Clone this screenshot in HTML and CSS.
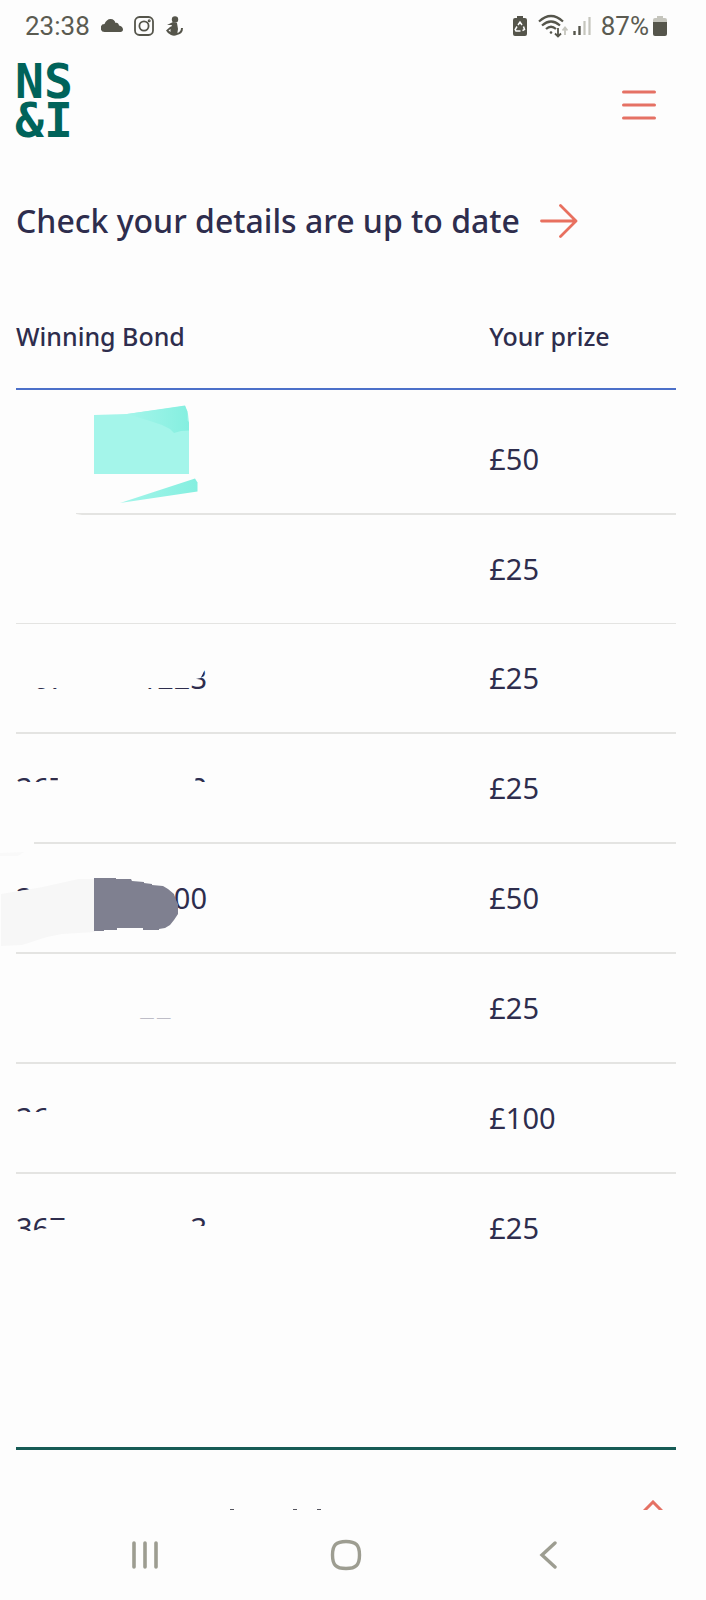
FILE: index.html
```
<!DOCTYPE html>
<html lang="en">
<head>
    <meta charset="UTF-8">
    <meta name="viewport" content="width=device-width, initial-scale=1">
    <title>NS&amp;I</title>
    <link rel="stylesheet" href="styles.css">
</head>
<body>

    <div class="status">
        <span class="status-time">23:38</span>
        <div class="status-left">
            <svg width="22" height="22" viewBox="0 0 22 22"><path fill="#55554b" d="M4 17a4 4 0 0 1-.5-8C4.500 6 7 4 9.500 4c3 0 4.500 2 5 4 2-.5 3 .5 3.500 2.500C20 11 22 12 22 14.500c0 1.500-1 2.500-2.500 2.500z"/></svg>
            <svg width="20" height="20" viewBox="0 0 20 20" fill="none" stroke="#55554b" stroke-width="1.800"><rect x="1" y="1" width="18" height="18" rx="4.500"/><circle cx="10" cy="10" r="4.600"/><circle cx="15.200" cy="4.800" r=".6"/></svg>
            <svg width="18" height="20" viewBox="0 0 18 20"><circle cx="10" cy="3.500" r="3.200" fill="#55554b"/><path fill="#55554b" d="M8 6l4 1 1 6-1 6q-3 1.500-6 0Q3 18 1 14.500L5 11l2-1-.5-1L2 9z"/><path d="M12 18q5-1 5-6" stroke="#55554b" stroke-width="2" fill="none"/><path d="M3.500 14.500l2-1.500v3z" fill="#fdfdfd"/></svg>
        </div>
        <div class="status-right">
            <svg class="saver" width="14" height="22" viewBox="0 0 14 22"><path fill="#55554b" d="M4 1h6v2h2q2 0 2 2v14q0 2-2 2H2q-2 0-2-2V5q0-2 2-2h2z"/><path d="M5 10l2-3 2 3M10.500 11.500l1 3-2 1.200M7.500 16H3l-.8-1.500L4 11.500" fill="none" stroke="#fdfdfd" stroke-width="1.500"/></svg>
            <svg class="wifi" width="30" height="24" viewBox="0 0 30 24" fill="none" stroke="#55554b" stroke-width="2.200"><path d="M1 7.500q12-11 24 0M4 11.500q9-8 18 0M8 15q5-4.500 10 0"/><circle cx="13" cy="18.500" r="1.300" fill="#55554b" stroke="none"/><path d="M20 14v8M17 19.500l3 3 3-3" stroke-width="1.800"/><path d="M27 21v-7M24.500 16.500l2.500-3 2.500 3" stroke="#c5c5bd" stroke-width="1.800"/></svg>
            <svg width="18" height="20" viewBox="0 0 18 20"><path d="M1.500 15v4M6.500 10v9" stroke="#55554b" stroke-width="2.400"/><path d="M11.500 5v14M16.500 1v18" stroke="#c5c5bd" stroke-width="2.200"/></svg>
            <span class="status-pct">87%</span>
            <svg width="14" height="22" viewBox="0 0 14 22"><path fill="#c5c5bd" d="M4 1h6v2h2q2 0 2 2v3H0V5q0-2 2-2h2z"/><path fill="#55554b" d="M0 7h14v12q0 2-2 2H2q-2 0-2-2z"/></svg>
        </div>
    </div>

    <header class="header">
        <a href="#" class="logo">NS<br>&amp;I</a>
        <button type="button" class="menu-btn" aria-label="Menu">
            <svg width="34" height="30" viewBox="0 0 34 30" stroke="#e57164" stroke-width="3" stroke-linecap="round"><path d="M1.500 2h31M1.500 15h31M1.500 28h31"/></svg>
        </button>
    </header>

    <main class="main">
        <a href="#" class="details-link">
            Check your details are up to date
            <svg width="38" height="34" viewBox="0 0 38 34" fill="none" stroke="#e8705f" stroke-width="2.800" stroke-linecap="round" stroke-linejoin="round"><path d="M1.500 17h34M20.500 1.500L36 17 20.500 32.500"/></svg>
        </a>

        <table class="prizes">
            <thead>
                <tr><th class="col-bond">Winning Bond</th><th>Your prize</th></tr>
            </thead>
            <tbody>
                <tr class="first">
                    <td>
                        <svg class="scribble" width="220" height="126" viewBox="0 0 220 126">
                            <defs>
                                <linearGradient id="mint"><stop offset="0" stop-color="#a4f5ea"/><stop offset="1" stop-color="#85efe0"/></linearGradient>
                            </defs>
                            <path fill="#a4f5ea" d="M94 25l33-1 58-8 3 8 1 8v52H94z"/>
                            <path fill="url(#mint)" d="M127 24l58-8.500 2.500 6v9l1.500 2v8l-8 .5-7 2-4-4-8-4-12-4z"/>
                            <path fill="url(#mint)" d="M120 113l75-24.500 2.500 4v9z"/>
                            <path fill="#fdfdfd" d="M14 122h62v2l6 1H14z"/>
                        </svg>
                    </td>
                    <td>£50</td>
                </tr>
                <tr class="thin"><td></td><td>£25</td></tr>
                <tr>
                    <td><div class="bond"><span class="feet">367V</span><span class="feet-last">1223</span></div></td>
                    <td>£25</td>
                </tr>
                <tr>
                    <td>
                        <div class="bond"><span class="tops tops-short">367</span><span class="tops tops-end">3</span></div>
                        <svg class="scribble" width="220" height="112" viewBox="0 0 220 112"><path fill="#fdfdfd" d="M14 107h20v4H14z"/></svg>
                    </td>
                    <td>£25</td>
                </tr>
                <tr>
                    <td>
                        <div class="bond"><span class="tops">36</span><span>00</span></div>
                        <svg class="scribble" width="220" height="110" viewBox="0 0 220 110">
                            <path fill="#f9f9f9" d="M0 9l24-1-6 4H0z"/>
                            <path fill="#f7f7f7" d="M1 50l42-7 36-8h16v53l-33 2-15 3-25 8-21 1z"/>
                            <path fill="#7f8090" d="M94 34h22v1h15l1 2 12 1v1l8 1v1l11 1 5 3 6 5 2 6 2 4v10l-4 6-4 5-5 3-6 1v1h-16v-2h-26v2h-13v1H94z"/>
                        </svg>
                    </td>
                    <td>£50</td>
                </tr>
                <tr>
                    <td><div class="bond bond-short"><span></span><span class="feet-faint">22</span></div></td>
                    <td>£25</td>
                </tr>
                <tr>
                    <td><div class="bond"><span class="tops">36</span></div></td>
                    <td>£100</td>
                </tr>
                <tr class="last">
                    <td><div class="bond"><span class="heads">367</span><span class="head-last">3</span></div></td>
                    <td>£25</td>
                </tr>
            </tbody>
        </table>

        <section class="accordion">
            <svg width="92" height="1" viewBox="0 0 92 1" fill="#55555f"><path d="M0 0h4v1H0zM63 0h4v1h-4zM87 0h4v1h-4z"/></svg>
            <button type="button" class="accordion-btn" aria-label="Expand">
                <svg width="20" height="10" viewBox="0 0 20 10" fill="none" stroke="#e57164" stroke-width="3"><path d="M0 12L10 2l10 10"/></svg>
            </button>
        </section>
    </main>

    <nav class="navbar">
        <button type="button" aria-label="Recent apps">
            <svg width="28" height="28" viewBox="0 0 28 28" stroke="#9d9d91" stroke-width="3.600" stroke-linecap="round"><path d="M3 2v24M14 2v24M25 2v24"/></svg>
        </button>
        <button type="button" aria-label="Home">
            <svg width="32" height="32" viewBox="0 0 32 32" fill="none" stroke="#9d9d91" stroke-width="3.400"><path d="M16 2.500c10 0 13.500 3.500 13.500 13.500S26 29.500 16 29.500 2.500 26 2.500 16 6 2.500 16 2.500z"/></svg>
        </button>
        <button type="button" aria-label="Back">
            <svg width="28" height="28" viewBox="0 0 28 28" fill="none" stroke="#9d9d91" stroke-width="3.400" stroke-linecap="round"><path d="M22 2L9 14l13 12"/></svg>
        </button>
    </nav>

</body>
</html>
```
FILE: styles.css
```
* {
    box-sizing: border-box;
}

body {
    margin: 0;
    background: #fdfdfd;
    color: #2e2d4d;
    font-family: "Noto Sans", sans-serif;
    font-size: 29px;
    line-height: 40px;
}

button {
    padding: 0;
    border: 0;
    background: none;
    cursor: pointer;
}

svg {
    display: block;
}

/* status bar */
.status {
    display: flex;
    align-items: center;
    height: 52px;
    padding: 0 39px 0 25px;
    color: #5b5b51;
    font-family: Roboto, sans-serif;
    font-size: 26px;
}

.status-left,
.status-right {
    display: flex;
    align-items: center;
    gap: 10px;
}

.status-left {
    gap: 11px;
    margin-left: 11px;
}

.status-right {
    margin-left: auto;
}

.saver {
    margin-right: 1px;
}

.wifi {
    margin-right: -5px;
}

.status-pct {
    margin-right: -6px;
}

/* header */
.header {
    display: flex;
    align-items: center;
    justify-content: space-between;
    padding: 10px 50px 0 15px;
}

.logo {
    color: #00635a;
    font-family: "DejaVu Sans Mono", monospace;
    font-size: 48px;
    font-weight: 700;
    line-height: 39px;
    text-decoration: none;
}

.menu-btn {
    margin-top: 8px;
}

.main {
    padding: 57px 30px 0 16px;
}

.details-link {
    display: flex;
    align-items: center;
    gap: 20px;
    color: inherit;
    font-size: 32px;
    font-weight: 500;
    line-height: 48px;
    text-decoration: none;
}

/* prize table */
.prizes {
    width: 100%;
    margin-top: 73px;
    border-spacing: 0;
    table-layout: fixed;
}

.prizes th {
    padding: 0 0 34px;
    border-bottom: 2px solid #4c70c9;
    font-size: 25px;
    font-weight: 500;
    line-height: 36px;
    text-align: left;
}

.prizes .col-bond {
    width: 71.7%;
}

.prizes td {
    position: relative;
    padding: 34px 0;
    border-bottom: 2px solid #e4e4e2;
    vertical-align: top;
}

.prizes .first td {
    padding-top: 49px;
}

.prizes .thin td {
    border-bottom-width: 1px;
}

.prizes .last td {
    border-bottom: 0;
}

.scribble {
    position: absolute;
    top: 0;
    left: -16px;
}

/* half rubbed-out bond numbers */
.bond {
    display: flex;
    justify-content: space-between;
    width: 191px;
    height: 40px;
}

.bond-short {
    width: 156px;
}

.tops {
    clip-path: inset(0 0 26px 0);
}

.tops-short {
    clip-path: inset(0 8px 26px 0);
}

.tops-end {
    clip-path: inset(0 0 26px 5px);
}

.feet {
    clip-path: inset(30px 12px 8px 20px);
}

.feet-faint {
    clip-path: inset(30px 0 8px 0);
    opacity: .3;
}

.feet-last {
    clip-path: polygon(0 30px, 50px 30px, 50px 22px, 60px 20px, 64px 12px, 100% 12px, 100% 100%, 0 100%);
}

.heads {
    clip-path: polygon(0 0, 100% 0, 100% 12px, 32px 12px, 32px 20px, 14px 23px, 0 23px);
}

.head-last {
    clip-path: inset(0 0 22px 0);
}

.accordion {
    display: flex;
    align-items: flex-end;
    justify-content: space-between;
    height: 63px;
    margin-top: 165px;
    padding: 0 13px 0 214px;
    border-top: 3px solid #165b55;
}

/* bottom navigation */
.navbar {
    display: flex;
    align-items: center;
    justify-content: space-around;
    height: 90px;
    padding: 0 60px 0 46px;
}
```
